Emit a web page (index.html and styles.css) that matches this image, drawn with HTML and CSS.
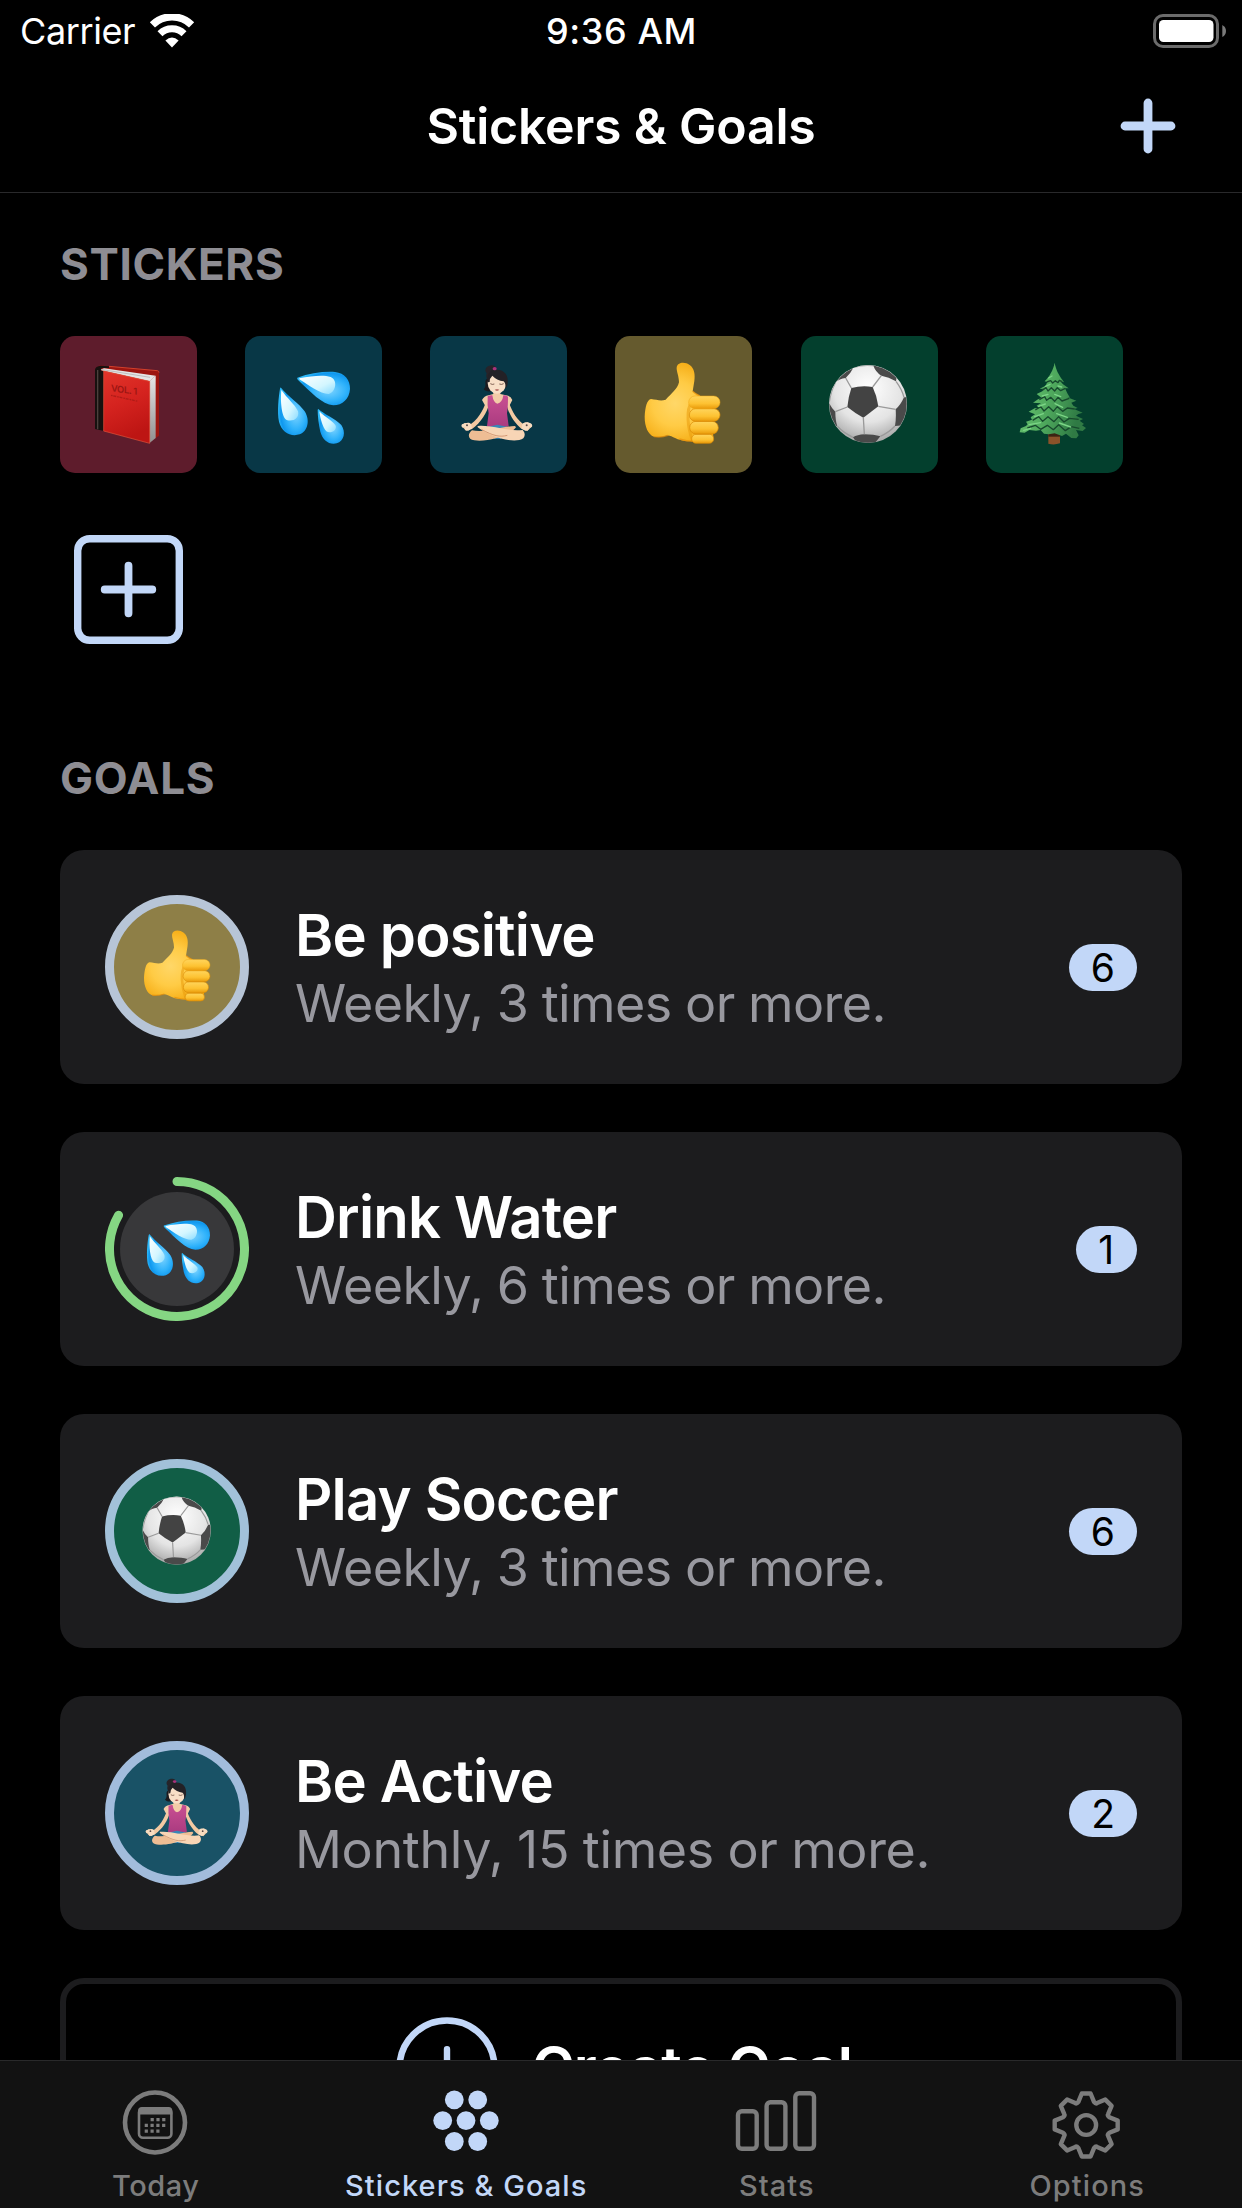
FILE: index.html
```
<!DOCTYPE html>
<html lang="en">
<head>
<meta charset="utf-8">
<title>Stickers &amp; Goals</title>
<link rel="stylesheet" href="styles.css">
</head>
<body>
<svg class="defs" aria-hidden="true">
  <defs>
    <linearGradient id="cover" x1="0" y1="0" x2="0.3" y2="1"><stop offset="0" stop-color="#e2352a"/><stop offset="0.5" stop-color="#d5231f"/><stop offset="1" stop-color="#bd1513"/></linearGradient>
    <linearGradient id="pages" x1="0" y1="0" x2="0" y2="1"><stop offset="0" stop-color="#e6e6e6"/><stop offset="1" stop-color="#8f8f8f"/></linearGradient>
    <radialGradient id="drop" cx="0.6" cy="0.55" r="0.6"><stop offset="0" stop-color="#7fd4ff"/><stop offset="0.55" stop-color="#2fb2fb"/><stop offset="0.85" stop-color="#0f97ee"/><stop offset="1" stop-color="#2cb8f8"/></radialGradient>
    <linearGradient id="shine" x1="0" y1="0" x2="1" y2="1"><stop offset="0" stop-color="#ffffff"/><stop offset="0.6" stop-color="#d3f6ff"/><stop offset="1" stop-color="#8bdcff"/></linearGradient>
    <radialGradient id="hand" gradientUnits="userSpaceOnUse" cx="795" cy="250" r="135"><stop offset="0" stop-color="#ffd768"/><stop offset="0.5" stop-color="#ffcb45"/><stop offset="1" stop-color="#f4a90f"/></radialGradient>
    <linearGradient id="finger" x1="0" y1="0" x2="0" y2="1"><stop offset="0" stop-color="#ffd55c"/><stop offset="0.6" stop-color="#fdc232"/><stop offset="1" stop-color="#e99a0a"/></linearGradient>
    <radialGradient id="ball" cx="0.5" cy="0.3" r="0.72"><stop offset="0" stop-color="#ffffff"/><stop offset="0.6" stop-color="#e4e4e4"/><stop offset="1" stop-color="#a3a3a3"/></radialGradient>
    <clipPath id="ballclip"><circle cx="264" cy="252" r="116"/></clipPath>
    <linearGradient id="top" x1="0" y1="0" x2="0" y2="1"><stop offset="0" stop-color="#c94f92"/><stop offset="1" stop-color="#a83a7f"/></linearGradient>
    <linearGradient id="leaf" x1="0" y1="0" x2="1" y2="0.3"><stop offset="0" stop-color="#6cc873"/><stop offset="0.55" stop-color="#4fa95d"/><stop offset="1" stop-color="#2f7a44"/></linearGradient>

    <symbol id="book" viewBox="60 48 411 411">
      <path d="M172 140Q178 136 190 137L352 152Q357 153 357 158V347L330 366Z" fill="#9c1510"/>
      <path d="M207 139L352 152Q357 153 357 158" fill="none" stroke="#d2402c" stroke-width="3"/>
      <path d="M180 150L192 145L347 167L329 184Z" fill="#e4e4e4"/>
      <path d="M182 148L330 172" stroke="#aaa" stroke-width="2"/>
      <path d="M328 184L347 167V354L328 370Z" fill="url(#pages)"/>
      <path d="M165 149Q166 138 182 137L207 139V144L186 144Q180 148 184 152L192 154V333L165 327Z" fill="#17110f"/>
      <path d="M173 150V328" stroke="#4a403c" stroke-width="4"/>
      <path d="M191 153L329 184V370L191 333Z" fill="url(#cover)" stroke="#e4533a" stroke-width="2"/>
      <text class="volume" transform="matrix(1 .13 0 1 213 214)">VOL. 1</text>
      <path d="M213 226L294 244" stroke="#b01c18" stroke-width="4" stroke-dasharray="5 2 9 3"/>
    </symbol>

    <symbol id="drops" viewBox="615 48 411 411">
      <path d="M772 173C808 160 850 154 885 156C914 159 931 180 930 207C928 236 908 256 880 256C846 254 812 216 775 181Q770 176 772 173Z" fill="url(#drop)"/>
      <path d="M778 175C815 168 850 164 872 171C894 180 888 216 866 222C840 222 806 196 778 178Z" fill="url(#shine)"/>
      <path d="M723 203C744 230 778 250 794 274C812 303 802 335 779 343C752 352 725 336 717 305C711 276 716 228 720 206Q721 202 723 203Z" fill="url(#drop)"/>
      <path d="M724 210C742 236 764 252 774 274C779 296 758 306 740 300C724 290 721 244 724 210Z" fill="url(#shine)"/>
      <path d="M835 267C852 283 886 296 904 315C918 336 913 363 890 370C866 375 848 360 841 335C836 312 833 288 833 269Z" fill="url(#drop)"/>
      <path d="M838 274C852 290 878 302 887 317C891 331 872 342 859 334C848 322 841 296 838 274Z" fill="url(#shine)"/>
    </symbol>

    <symbol id="yoga" viewBox="60 48 411 411">
      <path d="M229 178C222 186 232 197 221 208C229 216 244 217 252 208L246 168Z" fill="#1c1a1f"/>
      <path d="M230 160C220 148 232 135 247 136C259 137 262 149 256 159L234 180Q226 172 230 160Z" fill="#26242a"/>
      <path d="M233 233C222 262 212 290 183 312L164 309L155 318L168 332L186 327C212 308 232 278 238 248ZM291 233C302 262 310 288 338 311L354 307L367 318L352 333L334 326C312 308 294 278 288 248Z" fill="#f2c9a2"/>
      <path d="M183 312C176 305 165 310 156 313Q152 319 158 323L166 321Q160 331 175 332L186 325ZM337 312C344 304 356 307 364 311Q370 317 362 323L356 319Q360 331 346 332L335 326Z" fill="#f8dcc0"/>
      <circle cx="171" cy="316" r="3" fill="#5b4a48"/><circle cx="350" cy="316" r="3" fill="#5b4a48"/>
      <path d="M216 240Q222 228 236 226L250 222V205H271V222L288 226Q302 228 307 240L296 262L288 258H236L228 262Z" fill="#f3cca8"/>
      <path d="M233 229Q240 225 247 226Q250 248 262 251Q277 248 280 226Q288 225 294 230Q294 262 291 280L296 318Q262 334 231 318L236 280Q231 256 233 229Z" fill="url(#top)"/>
      <ellipse cx="261" cy="189" rx="28" ry="32" fill="#f8dfc7"/>
      <path d="M234 187C229 165 238 149 260 149C285 149 296 168 293 190Q291 203 286 206Q288 190 281 184Q260 181 247 167Q239 174 239 186Z" fill="#232126"/>
      <ellipse cx="254" cy="146" rx="6" ry="5" fill="#a8327c"/>
      <path d="M241 191Q247 195 253 192M268 192Q275 195 281 191" fill="none" stroke="#67483d" stroke-width="2.5"/>
      <path d="M254 209Q261 206 268 209Q261 215 254 209Z" fill="#a64d49"/>
      <path d="M236 320L262 314L290 320L272 356H252Z" fill="#3787b8"/>
      <path d="M315 318C280 318 226 340 186 331C172 343 173 358 193 361C237 367 304 344 318 322Z" fill="#eebd94"/>
      <path d="M204 318C246 314 294 336 338 330C349 342 345 357 328 360C286 367 230 342 206 324Q200 320 204 318Z" fill="#f8d5b5"/>
      <path d="M214 328C250 348 270 352 292 346" fill="none" stroke="#cc8d68" stroke-width="2.5"/>
    </symbol>

    <symbol id="thumb" viewBox="615 48 411 411">
      <path d="M723 237C740 239 752 244 767 239C785 220 802 207 807 187C807 168 799 153 800 143C802 125 826 125 839 135C853 145 856 163 853 183L848 214Q862 224 872 229L905 260L910 352L872 365C842 366 815 364 797 355C784 349 779 345 768 347C755 352 740 351 732 350C714 343 704 320 704 290C706 260 711 239 723 237Z" fill="url(#hand)"/>
      <path d="M845 245C828 270 832 320 848 363" fill="none" stroke="#e99c0d" stroke-width="9" opacity="0.55"/>
      <path d="M774 346C756 353 740 351 732 350M808 357Q830 364 852 364M848 214Q858 224 870 228" fill="none" stroke="#e68d08" stroke-width="4" opacity="0.7"/>
      <rect x="845" y="343" width="66" height="27" rx="13" fill="url(#finger)" stroke="#d98a05" stroke-width="2"/>
      <rect x="839" y="304" width="86" height="38" rx="19" fill="url(#finger)" stroke="#d98a05" stroke-width="2"/>
      <rect x="838" y="266" width="92" height="38" rx="19" fill="url(#finger)" stroke="#d98a05" stroke-width="2"/>
      <rect x="836" y="228" width="94" height="38" rx="19" fill="url(#finger)" stroke="#eda514" stroke-width="1.5"/>
    </symbol>

    <symbol id="soccer" viewBox="63 48 411 411">
      <circle cx="264" cy="252" r="117" fill="url(#ball)"/>
      <g clip-path="url(#ballclip)">
        <path d="M214 204Q245 196 278 201Q291 228 295 259Q272 277 250 293Q224 279 202 261Q205 230 214 204Z" fill="#434343"/>
        <path d="M166 188Q178 176 197 174Q213 159 221 142L205 130L160 165ZM280 137Q287 156 304 167Q326 170 348 184L352 160L300 130ZM145 245Q154 264 166 275Q166 302 172 319L145 320ZM372 232Q362 255 347 268Q349 295 345 318L385 315V232ZM219 352Q232 344 253 343Q282 343 301 349L280 375H235Z" fill="#4a4a4a"/>
        <path d="M214 204L197 174M278 201L304 167M295 259L347 268M250 293L253 343M202 261L166 275M221 142Q250 133 280 137M166 188Q152 215 148 245M348 184Q366 208 372 232M172 319Q192 340 219 352M301 349Q328 337 345 318" fill="none" stroke="#9a9a9a" stroke-width="4"/>
      </g>
    </symbol>

    <symbol id="tree" viewBox="618 48 411 411">
      <path d="M805 330H840V370Q822 376 805 371Z" fill="#8a5229"/>
      <path d="M805 336H840V350H805Z" fill="#3b2313"/>
      <path d="M824 128C828 150 836 164 847 179L852 187L841 184L849 193L866 205L855 205L862 220L870 233L862 232L889 242L874 248L880 257L893 264L882 267L908 278L895 282L888 287L909 297L899 302L912 312L906 316L918 324L908 333L888 330L896 346L889 355L874 354L858 341L846 348L824 340L806 343L792 341L782 330L768 332L748 330L734 338L719 337L722 325L738 318L743 313L738 305L756 299L752 292L765 283L746 275L764 265L778 265L770 257L783 250L759 248L774 238L785 234L770 222L787 214L794 206L779 206L797 197L802 186L794 184C808 170 820 150 824 128Z" fill="url(#leaf)"/>
      <path d="M800 186L812 182L818 189L826 182L834 188L838 181L847 185M786 211L798 203L804 213L814 203L824 213L832 203L842 212L856 205M778 239L794 230L800 241L812 232L824 244L834 232L846 243L868 235M766 270L782 260L792 273L806 260L820 274L832 260L848 274L862 264L884 267M758 301L776 290L788 304L804 290L822 305L836 290L852 306L868 295L896 298M742 324L766 316L782 328L802 316L820 329L836 314L856 332L874 320L898 325" fill="none" stroke="#174a2d" stroke-width="4" stroke-linejoin="round"/>
      <path d="M806 174L816 168M796 199L810 193M834 198L845 201M787 228L804 223M824 223L842 230M776 259L796 252M825 251L848 262M764 290L790 281M830 281L862 292M747 314L782 308M838 309L872 321M731 331L752 325" fill="none" stroke="#7bd586" stroke-width="4" stroke-linecap="round"/>
    </symbol>
  </defs>
</svg>

<header class="status">
  <div class="status-side">
    <span class="carrier">Carrier</span>
    <svg class="wifi" viewBox="0 0 46 34">
      <path d="M3.4 13.5A28 28 0 0 1 42.6 13.5" fill="none" stroke="#fff" stroke-width="7.4" transform="translate(0 -2.6)"/>
      <path d="M11 21.2A17 17 0 0 1 35 21.2" fill="none" stroke="#fff" stroke-width="7"  transform="translate(0 -1.4)"/>
      <path d="M23 33.4L16.4 26.4Q23 20.6 29.6 26.4Z" fill="#fff"/>
    </svg>
  </div>
  <span class="time">9:36 AM</span>
  <div class="status-side status-right">
    <svg class="battery" viewBox="0 0 74 34">
      <rect x="1.5" y="1.5" width="63" height="31" rx="8.5" fill="none" stroke="#6b6b6b" stroke-width="3"/>
      <rect x="6" y="6" width="54.5" height="22" rx="4.5" fill="#fff"/>
      <path d="M69.3 11Q73 13 73 17T69.3 23Z" fill="#7a7a7a"/>
    </svg>
  </div>
</header>

<nav class="navbar">
  <h1>Stickers &amp; Goals</h1>
  <svg class="add" viewBox="-28 -28 56 56"><path d="M0-23V23M-23 0H23" stroke="#c2d7f8" stroke-width="8.8" stroke-linecap="round"/></svg>
</nav>

<main>
  <h2>STICKERS</h2>
  <div class="stickers">
    <div class="tile red"><svg><use href="#book"/></svg></div>
    <div class="tile blue"><svg><use href="#drops"/></svg></div>
    <div class="tile blue"><svg><use href="#yoga"/></svg></div>
    <div class="tile gold"><svg><use href="#thumb"/></svg></div>
    <div class="tile green"><svg><use href="#soccer"/></svg></div>
    <div class="tile green"><svg><use href="#tree"/></svg></div>
    <div class="tile"><svg viewBox="-68.5 -68.5 137 137"><rect x="-50.8" y="-50.8" width="101.6" height="101.6" rx="12" fill="none" stroke="#c2d7f8" stroke-width="7.4"/><path d="M0-23.8V23.8M-23.8 0H23.8" stroke="#c2d7f8" stroke-width="7.8" stroke-linecap="round"/></svg></div>
  </div>

  <h2 class="goals-title">GOALS</h2>
  <div class="goals">
    <article class="goal">
      <div class="ring positive"><svg><use href="#thumb"/></svg></div>
      <div class="info"><h3>Be positive</h3><p>Weekly, 3 times or more.</p></div>
      <span class="count">6</span>
    </article>
    <article class="goal">
      <div class="ring progress">
        <svg class="arc" viewBox="-72 -72 144 144"><circle r="57" fill="#38383a"/><path d="M0-67.5A67.5 67.5 0 1 1-58.46-33.75" fill="none" stroke="#85d683" stroke-width="9" stroke-linecap="round"/></svg>
        <svg><use href="#drops"/></svg>
      </div>
      <div class="info"><h3>Drink Water</h3><p>Weekly, 6 times or more.</p></div>
      <span class="count one">1</span>
    </article>
    <article class="goal">
      <div class="ring sport"><svg><use href="#soccer"/></svg></div>
      <div class="info"><h3>Play Soccer</h3><p>Weekly, 3 times or more.</p></div>
      <span class="count">6</span>
    </article>
    <article class="goal">
      <div class="ring active"><svg><use href="#yoga"/></svg></div>
      <div class="info"><h3>Be Active</h3><p class="monthly">Monthly, 15 times or more.</p></div>
      <span class="count">2</span>
    </article>
    <div class="create">
      <svg viewBox="-51 -51 102 102"><circle r="47.5" fill="none" stroke="#c2d7f8" stroke-width="6.6"/><path d="M0-18.8V18.8M-18.8 0H18.8" stroke="#c2d7f8" stroke-width="6.4" stroke-linecap="round"/></svg>
      <h3>Create Goal</h3>
    </div>
  </div>
</main>

<footer class="tabs">
  <div class="tab">
    <svg viewBox="-45 -36 90 72" fill="none" stroke="currentColor">
      <circle cy="-2.5" r="30" stroke-width="4.6"/>
      <rect x="-16" y="-16.4" width="32.4" height="29.2" rx="4" stroke-width="2.6"/>
      <path d="M-17-10.5V-14Q-17-18-13-18H13.5Q17.3-18 17.3-14V-10.5Z" fill="currentColor" stroke="none"/>
      <path d="M-4.4-5.3H10.6M-10.3.4H10.6M-10.3 6.1H4.5" stroke-width="3.2" stroke-dasharray="3.2 2.6"/>
    </svg>
    <span class="label today">Today</span>
  </div>
  <div class="tab selected">
    <svg viewBox="-45 -36 90 72" fill="currentColor"><circle cx="-11.7" cy="-25.2" r="9.4"/><circle cx="11.7" cy="-25.2" r="9.4"/><circle cx="-23.3" cy="-4.4" r="9.4"/><circle cy="-4.4" r="9.4"/><circle cx="23.3" cy="-4.4" r="9.4"/><circle cx="-11.7" cy="16.5" r="9.4"/><circle cx="11.7" cy="16.5" r="9.4"/></svg>
    <span class="label">Stickers &amp; Goals</span>
  </div>
  <div class="tab">
    <svg viewBox="-45 -36 90 72" fill="none" stroke="currentColor" stroke-width="4.4"><rect x="-38" y="-13.8" width="18.7" height="37.6" rx="3.8"/><rect x="-9.4" y="-22.8" width="18.8" height="46.6" rx="3.8"/><rect x="19.3" y="-31.8" width="18.7" height="55.6" rx="3.8"/></svg>
    <span class="label">Stats</span>
  </div>
  <div class="tab">
    <svg viewBox="-44.2 -36 90 72" fill="none" stroke="currentColor" stroke-width="4.4" stroke-linejoin="round"><path d="M-4.4-31.5H4.4L7.8-23.2Q9.5-21 10.9-21.9L19.1-25.4L25.4-19.1L21.9-10.9Q21-9.5 23.2-7.8L31.5-4.4V4.4L23.2 7.8Q21 9.5 21.9 10.9L25.4 19.1L19.1 25.4L10.9 21.9Q9.5 21 7.8 23.2L4.4 31.5H-4.4L-7.8 23.2Q-9.5 21-10.9 21.9L-19.1 25.4L-25.4 19.1L-21.9 10.9Q-21 9.5-23.2 7.8L-31.5 4.4V-4.4L-23.2-7.8Q-21-9.5-21.9-10.9L-25.4-19.1L-19.1-25.4L-10.9-21.9Q-9.5-21-7.8-23.2Z"/><circle r="9.9"/></svg>
    <span class="label">Options</span>
  </div>
</footer>
</body>
</html>
```
FILE: styles.css
```
* { box-sizing: border-box; margin: 0; }

body {
  display: flex;
  flex-direction: column;
  height: 2208px;
  overflow: hidden;
  background: #000;
  color: #fff;
  font-family: Inter, "Liberation Sans", sans-serif;
}

svg { display: block; }
.defs { position: absolute; width: 0; height: 0; }
.volume { font: 600 28px Inter, sans-serif; letter-spacing: -1px; fill: #9c1613; }

/* Status bar */
.status {
  display: flex;
  flex: none;
  align-items: center;
  height: 60px;
  padding: 1px 14px 0 20px;
  font-size: 36px;
  line-height: 60px;
}
.status-side { display: flex; flex: 1; align-items: center; gap: 14px; }
.status-right { justify-content: flex-end; }
.carrier { letter-spacing: -0.4px; }
.wifi { width: 46px; height: 34px; }
.time { margin: 0 2.5px 0 -2.5px; font-weight: 500; letter-spacing: 0.6px; }
.battery { width: 74px; height: 34px; margin-right: 1px; }

/* Navigation bar */
.navbar {
  display: grid;
  flex: none;
  grid-template-columns: 1fr auto 1fr;
  align-items: center;
  height: 133px;
  padding: 0 66px;
  border-bottom: 1px solid #29292b;
}
h1 {
  grid-column: 2;
  font-size: 50px;
  font-weight: 600;
  line-height: 60px;
  letter-spacing: -0.21px;
}
.add { width: 56px; height: 56px; justify-self: end; }

/* Content */
main { flex: 1; min-height: 0; overflow: hidden; padding: 45px 60px 0; }
h2 {
  margin-bottom: 46px;
  color: #8e8d93;
  font-size: 44px;
  font-weight: 700;
  line-height: 52px;
  letter-spacing: 0.65px;
}
.goals-title { margin-top: 94px; letter-spacing: 0.75px; }

.stickers {
  display: grid;
  grid-template-columns: repeat(6, 137px);
  gap: 48px 48.15px;
}
.tile { height: 137px; border-radius: 15px; }
.tile svg { width: 100%; height: 100%; }
.red { background: #5e1c2c; }
.blue { background: #083746; }
.gold { background: #655a2e; }
.green { background: #033f2d; }

.goals { display: flex; flex-direction: column; gap: 48px; }
.goal {
  display: flex;
  flex: none;
  align-items: center;
  height: 234px;
  padding: 0 45px;
  border-radius: 24px;
  background: #1c1c1e;
}
.ring {
  display: grid;
  flex: none;
  place-items: center;
  width: 144px;
  height: 144px;
  border: 9px solid transparent;
  border-radius: 50%;
}
.ring svg { grid-area: 1 / 1; width: 120px; height: 120px; margin: 0 0 0 2px; }
.ring.progress { border: 0; }
.ring svg.arc { width: 144px; height: 144px; margin: 0; }
.positive { border-color: #b7c5d7; background: #8e7f47; }
.sport { border-color: #a2c1d9; background: #115e46; }
.active { border-color: #a2bcdc; background: #195266; }

.info { flex: 1; padding: 3px 0 0 46px; }
h3 { font-size: 58px; font-weight: 600; line-height: 70px; letter-spacing: -0.8px; }
.info p {
  color: #98989f;
  font-size: 52px;
  line-height: 67px;
  letter-spacing: -0.6px;
  word-spacing: -0.6px;
}
.info .monthly { letter-spacing: -0.37px; }
.count {
  padding: 0 22px;
  border-radius: 24px;
  background: #c2d7f8;
  color: #000;
  font-size: 39px;
  line-height: 47px;
}
.count.one { padding: 0 23px 0 22px; }

.create {
  display: flex;
  flex: none;
  align-items: center;
  justify-content: center;
  gap: 34px;
  height: 180px;
  padding-left: 6px;
  border: 6px solid #1c1c1e;
  border-radius: 24px;
}
.create svg { width: 102px; height: 102px; }

/* Tab bar */
.tabs {
  display: grid;
  flex: none;
  grid-template-columns: repeat(4, 1fr);
  height: 148px;
  padding-top: 28px;
  border-top: 1px solid #29292a;
  background: #121212;
}
.tab {
  display: flex;
  flex-direction: column;
  align-items: center;
  gap: 7px;
  color: #7c7c7c;
}
.tab svg { width: 90px; height: 72px; }
.label { padding-left: 1px; font-size: 29px; font-weight: 500; line-height: 36px; letter-spacing: 1.06px; }
.label.today { letter-spacing: 0.5px; }
.selected { color: #c2d7f8; }
```
